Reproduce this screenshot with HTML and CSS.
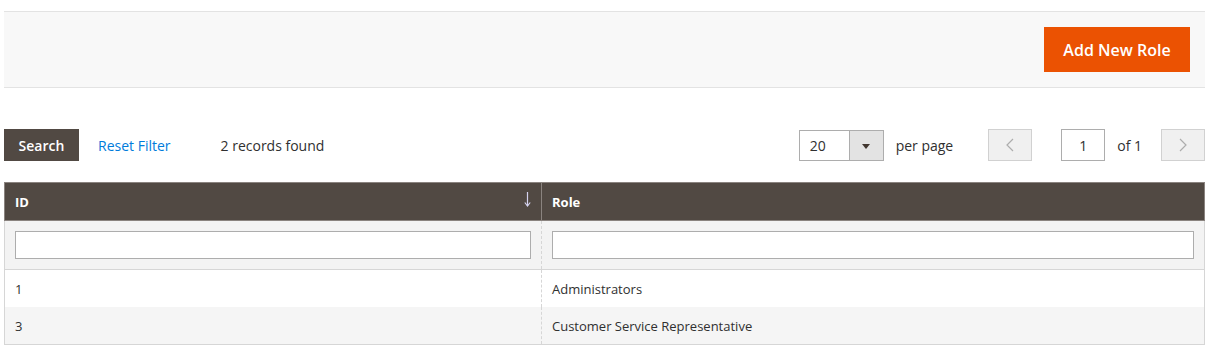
FILE: index.html
```html
<!DOCTYPE html>
<html lang="en">
<head>
  <meta charset="UTF-8">
  <title>User Roles</title>
  <link rel="stylesheet" href="styles.css">
</head>
<body>
  <!-- Barra de acciones -->
  <div class="page-actions">
    <button type="button" class="action-primary">Add New Role</button>
  </div>

  <!-- Barra de busqueda y paginacion -->
  <div class="grid-toolbar">
    <button type="button" class="action-search">Search</button>
    <a class="action-reset">Reset Filter</a>
    <span class="records-found">2 records found</span>

    <div class="pager">
      <div class="limiter">
        <span class="limiter-value">20</span>
        <span class="limiter-toggle"><span class="triangle"></span></span>
      </div>
      <span class="limiter-label">per page</span>
      <button type="button" class="pager-btn prev">
        <svg width="8" height="14" viewBox="0 0 8 14"><polyline points="7,1 1,7 7,13" fill="none" stroke="#adadad" stroke-width="1.2"/></svg>
      </button>
      <input type="text" class="page-input" value="1">
      <span class="pages-total">of 1</span>
      <button type="button" class="pager-btn next">
        <svg width="8" height="14" viewBox="0 0 8 14"><polyline points="1,1 7,7 1,13" fill="none" stroke="#adadad" stroke-width="1.2"/></svg>
      </button>
    </div>
  </div>

  <!-- Tabla de roles -->
  <table class="data-grid">
    <colgroup>
      <col class="col-id">
      <col>
    </colgroup>
    <thead>
      <tr class="headings">
        <th>
          ID
          <svg class="sort-arrow" width="7" height="15" viewBox="0 0 7 15"><line x1="3.5" y1="0" x2="3.5" y2="14" stroke="#d4d2ee" stroke-width="1.2"/><polyline points="0.8,10.5 3.5,14 6.2,10.5" fill="none" stroke="#d4d2ee" stroke-width="1.2"/></svg>
        </th>
        <th>Role</th>
      </tr>
      <tr class="filters">
        <td><input type="text"></td>
        <td><input type="text"></td>
      </tr>
    </thead>
    <tbody>
      <tr>
        <td>1</td>
        <td>Administrators</td>
      </tr>
      <tr class="even">
        <td>3</td>
        <td>Customer Service Representative</td>
      </tr>
    </tbody>
  </table>
</body>
</html>
```

FILE: styles.css
```css
/* Estilo global */
body {
  margin: 0;
  padding: 11px 5px 0 4px;
  font-family: "Open Sans", "Liberation Sans", sans-serif;
  font-size: 14px;
  color: #303030;
  background-color: #fff;
}

button {
  font-family: inherit;
  cursor: pointer;
}

/* Barra de acciones */
.page-actions {
  display: flex;
  justify-content: flex-end;
  background-color: #f8f8f8;
  border-top: 1px solid #e3e3e3;
  border-bottom: 1px solid #e3e3e3;
  padding: 15px 15px 15px;
}

.action-primary {
  height: 45px;
  width: 146px;
  padding: 0;
  border: none;
  background-color: #eb5202;
  color: #fff;
  font-size: 16px;
  font-weight: 600;
}

/* Barra de busqueda */
.grid-toolbar {
  display: flex;
  align-items: center;
  margin-top: 41px;
  height: 32px;
}

.action-search {
  height: 32px;
  width: 75px;
  padding: 0;
  border: none;
  background-color: #514943;
  color: #fff;
  font-size: 14px;
  font-weight: 600;
}

.action-reset {
  margin-left: 19px;
  color: #007bdb;
  cursor: pointer;
}

.records-found {
  margin-left: 50px;
}

/* Paginacion */
.pager {
  display: flex;
  align-items: center;
  margin-left: auto;
  height: 32px;
}

.limiter {
  display: flex;
  height: 31px;
  width: 85px;
  box-sizing: border-box;
  border: 1px solid #adadad;
}

.limiter-value {
  flex: 1;
  padding-left: 10px;
  line-height: 29px;
}

.limiter-toggle {
  width: 33px;
  border-left: 1px solid #adadad;
  background-color: #e3e3e3;
  display: flex;
  align-items: center;
  justify-content: center;
}

.triangle {
  width: 0;
  height: 0;
  border-left: 4px solid transparent;
  border-right: 4px solid transparent;
  border-top: 5px solid #41362f;
  margin-top: 2px;
}

.limiter-label {
  margin-left: 12px;
}

.pager-btn {
  width: 44px;
  height: 32px;
  padding: 0;
  box-sizing: border-box;
  border: 1px solid #d1d1d1;
  background-color: #f0f0f0;
  display: flex;
  align-items: center;
  justify-content: center;
}

.prev {
  margin-left: 35px;
}

.next {
  margin-left: 19px;
}

.page-input {
  margin-left: 29px;
  width: 44px;
  height: 32px;
  box-sizing: border-box;
  border: 1px solid #adadad;
  text-align: center;
  font-family: inherit;
  font-size: 14px;
  color: #303030;
  padding: 0;
}

.pages-total {
  margin-left: 12px;
}

/* Tabla */
.data-grid {
  width: 100%;
  margin-top: 21px;
  border-collapse: collapse;
  table-layout: fixed;
  font-size: 13px;
  border-left: 1px solid #d6d6d6;
  border-right: 1px solid #d6d6d6;
  border-bottom: 1px solid #d6d6d6;
}

.col-id {
  width: 537px;
}

.headings th {
  position: relative;
  background-color: #514943;
  border: 1px solid #8a837f;
  color: #fff;
  font-weight: 700;
  text-align: left;
  padding: 0 10px;
  height: 37px;
}

.sort-arrow {
  position: absolute;
  right: 10px;
  top: 9px;
}

.filters td {
  background-color: #f3f3f3;
  padding: 10px 10px 10px;
  border-bottom: 1px solid #d6d6d6;
  border-left: 1px dashed #d6d6d6;
}

.filters input {
  display: block;
  width: 100%;
  height: 28px;
  box-sizing: border-box;
  border: 1px solid #adadad;
  font-family: inherit;
}

tbody td {
  padding: 0 10px;
  height: 37px;
  border-left: 1px dashed #d6d6d6;
}

tbody tr.even td {
  background-color: #f5f5f5;
}
```
